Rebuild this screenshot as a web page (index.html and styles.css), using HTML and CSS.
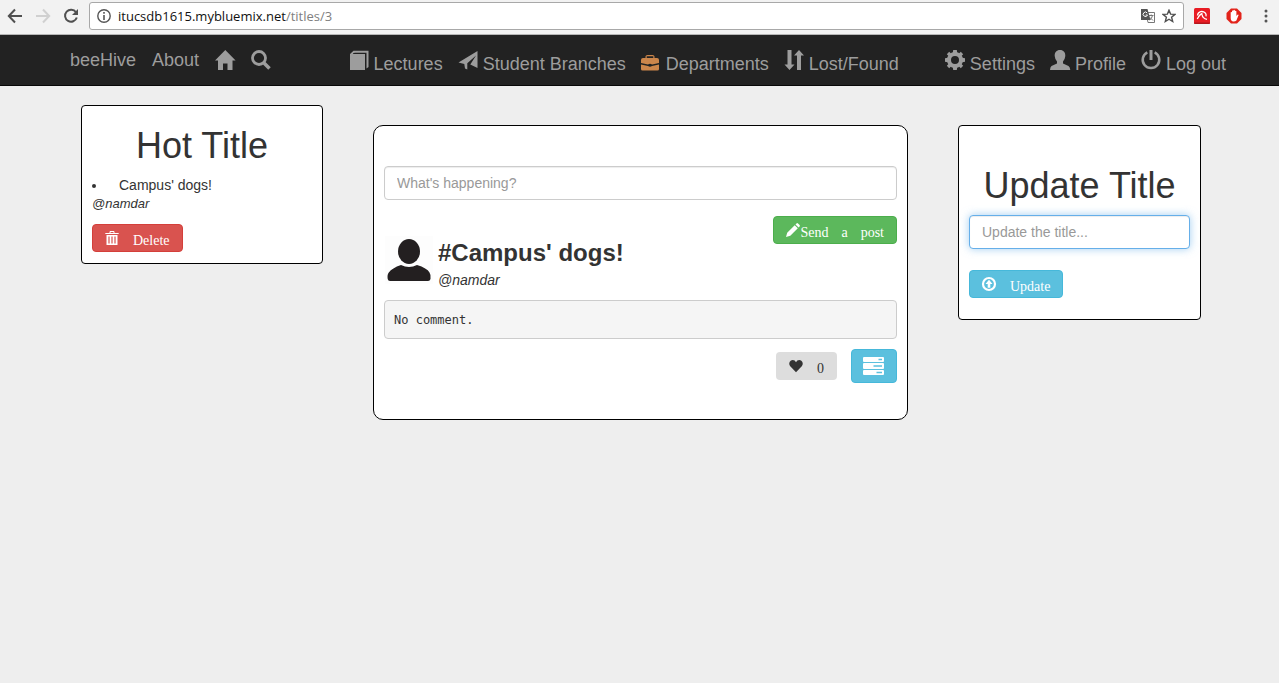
FILE: index.html
```html
<!DOCTYPE html>
<html lang="en">
<head>
<meta charset="utf-8">
<title>beeHive</title>
<link rel="stylesheet" href="styles.css">
</head>
<body>
<header class="browser">
  <button class="tool" aria-label="Back"><svg width="16" height="16" viewBox="0 0 16 16" fill="none" stroke="#505050" stroke-width="2"><path d="M15 8H2M8 1.500L1.800 8L8 14.500"/></svg></button>
  <button class="tool" aria-label="Forward"><svg width="16" height="16" viewBox="0 0 16 16" fill="none" stroke="#d0d0d0" stroke-width="2"><path d="M1 8H14M8 1.500L14.200 8L8 14.500"/></svg></button>
  <button class="tool" aria-label="Reload"><svg width="16" height="16" viewBox="0 0 16 16"><path d="M13 4.300A6 6 0 1 0 13.800 9.500" fill="none" stroke="#505050" stroke-width="2"/><path d="M15 1V7H9Z" fill="#505050"/></svg></button>
  <div class="address">
    <svg width="14" height="14" viewBox="0 0 14 14"><circle cx="7" cy="7" r="6.200" fill="none" stroke="#555" stroke-width="1.400"/><path d="M6.200 3h1.600v1.700H6.200zM6.200 6h1.600v5H6.200z" fill="#555"/></svg>
    <span class="url">itucsdb1615.mybluemix.net<span class="path">/titles/3</span></span>
    <button class="tool" aria-label="Translate"><svg width="14" height="14" viewBox="0 0 14 14"><path d="M5 3.500h8.500v10H7z" fill="#fff" stroke="#777"/><path d="M8 6.500h4.500M10.200 5.500v1M11.500 6.500q-.5 3-3 4.500M9 8.500l3 3" fill="none" stroke="#777"/><path d="M0 0h6.500l3 11H0z" fill="#555"/><path d="M6.200 4A2.200 2.200 0 1 0 6.500 6H4.700" fill="none" stroke="#fff"/></svg></button>
    <button class="tool" aria-label="Bookmark"><svg width="14" height="14" viewBox="0 0 14 14"><path d="M7 1.200L8.600 5.100L12.900 5.400L9.600 8.200L10.700 12.500L7 10.200L3.300 12.500L4.400 8.200L1.100 5.400L5.400 5.100Z" fill="none" stroke="#505050" stroke-width="1.400"/></svg></button>
  </div>
  <div class="extensions">
    <button class="tool" aria-label="Antivirus"><svg width="16" height="16" viewBox="0 0 16 16"><rect width="16" height="16" rx="1.500" fill="#e81c24"/><path d="M0 14.500h16v.5q0 1-1 1H1q-1 0-1-1z" fill="#b3161c"/><path d="M3.500 7.500C4 3.500 8.500 2.200 11.300 5Q12.500 6.500 12 8.300M8.500 5.500Q5.800 6 3.300 11M8 6.500Q8.500 10.500 13 11.300" fill="none" stroke="#fff" stroke-width="1.300"/></svg></button>
    <button class="tool" aria-label="Ad blocker"><svg width="16" height="16" viewBox="0 0 16 16"><path d="M5 0.500h6L15.500 5v6L11 15.500H5L.5 11V5z" fill="#e2231a"/><path d="M4.700 8V4.300q.7-.8 1.300 0V2.800q.7-.8 1.400 0V2.200q.8-.8 1.500 0v.8q.8-.7 1.500.2V8l1-1.200q1-.5 1.200.3L10.400 12.500Q9.500 13.500 7.500 13.500Q4.700 13.300 4.700 10z" fill="#fff"/></svg></button>
    <button class="tool" aria-label="Menu"><svg width="4" height="14" viewBox="0 0 4 14" fill="#555"><circle cx="2" cy="2" r="1.500"/><circle cx="2" cy="7" r="1.500"/><circle cx="2" cy="12" r="1.500"/></svg></button>
  </div>
</header>

<nav class="navbar">
  <div class="nav-group brand">
    <a href="#">beeHive</a>
    <a href="#">About</a>
    <a href="#" aria-label="Home"><svg class="icon" viewBox="0 0 20 20"><path d="M10.300 0L20.600 10.500H17.500V20H12.500V13.500H8V20H3V10.500H0Z"/></svg></a>
    <a href="#" aria-label="Search"><svg class="icon" viewBox="0 0 20 20"><circle cx="8" cy="8" r="6.500" fill="none" stroke="currentColor" stroke-width="2.800"/><path d="M12.500 12.500L18.500 18.500" stroke="currentColor" stroke-width="3.600"/></svg></a>
  </div>
  <div class="nav-group sections">
    <a href="#"><svg class="icon" viewBox="0 0 20 20"><path d="M1 4H16V20H1Z"/><path d="M1 4L4.500 .800H19.500V17L17.500 18.500V2.800H5.500L4.500 4Z"/><path d="M4 3.500H16.500V19" fill="none" stroke="#222" stroke-width=".8"/></svg>Lectures</a>
    <a href="#"><svg class="icon" viewBox="0 0 20 20"><path d="M19.500 1V18L12.300 14.500L18 5.500L9.300 13.200V19.500L7 18.500L6.300 14L.5 12.500Z"/></svg>Student Branches</a>
    <a href="#"><svg class="icon briefcase" viewBox="0 0 20 20"><path d="M4.500 8V6.500Q4.500 5 6.500 5H11.500Q13.500 5 13.500 6.500V8H12.300V6.300H5.700V8Z"/><path d="M2 8H16Q18 8 18 10V13L11 14.500Q9 13 7 14.500L0 13V10Q0 8 2 8Z"/><path d="M0 14.500L7 16Q9 17.500 11 16L18 14.500V19Q18 20.500 16.500 20.500H1.500Q0 20.500 0 19Z"/></svg>Departments</a>
    <a href="#"><svg class="icon" viewBox="0 0 20 20"><path d="M3.500 0H7.500V14.500H10.500L5.500 20L.5 14.500H3.500ZM13 20H17V5.500H20L15 0L10 5.500H13Z"/></svg>Lost/Found</a>
  </div>
  <div class="nav-group account">
    <a href="#"><svg class="icon" viewBox="0 0 20 20"><circle cx="10" cy="10" r="6" fill="none" stroke="currentColor" stroke-width="4"/><path d="M8.200 0h3.600l.6 4H7.600zM8.200 20h3.600l.6-4H7.600zM0 8.200v3.600l4 .6V7.600zM20 8.200v3.600l-4 .6V7.600zM4.200 1.800L1.800 4.200L4.500 7L7 4.500zM15.800 1.800L18.200 4.200L15.500 7L13 4.500zM4.200 18.200L1.800 15.800L4.500 13L7 15.500zM15.800 18.200L18.200 15.800L15.500 13L13 15.500z"/></svg>Settings</a>
    <a href="#"><svg class="icon" viewBox="0 0 20 20"><path d="M10 0C13.500 0 15.500 2.500 15.300 6Q15 9.500 13 11.500V13.500L18.500 16Q20 17 20.300 20H0Q.2 17 1.500 16L7 13.500V11.500Q5 9.500 4.700 6C4.500 2.500 6.500 0 10 0Z"/></svg>Profile</a>
    <a href="#"><svg class="icon" viewBox="0 0 20 20"><path d="M6.300 2.300A8.300 8.300 0 1 0 13.700 2.300" fill="none" stroke="currentColor" stroke-width="2.500"/><path d="M8.500 0h3v10h-3z"/></svg>Log out</a>
  </div>
</nav>

<main class="page">
  <section class="card hot">
    <h1>Hot Title</h1>
    <ul><li><span>Campus' dogs!</span></li></ul>
    <em class="author">@namdar</em>
    <button class="btn danger"><svg class="glyph" viewBox="0 0 14 14"><path d="M5 2V.5H9V2M.3 2.500H13.700" fill="none" stroke="currentColor"/><path d="M1.500 4H12.500V14H1.500Z"/><path d="M4 5.500V12.500M7 5.500V12.500M10 5.500V12.500" stroke="#d9534f" stroke-width="1.200"/></svg><span>Delete</span></button>
  </section>

  <section class="card feed">
    <input class="field" type="text" aria-label="New post" placeholder="What's happening?">
    <div class="post">
      <div class="media">
        <svg class="avatar" viewBox="0 0 48 48"><rect width="48" height="48" fill="#fdfdfd"/><ellipse cx="24" cy="15.500" rx="11" ry="12.500" fill="#231f20"/><path d="M16 29Q24 33 32 29Q42 32 44.500 36.500Q46 38.500 45.500 43Q45 45 43 45H5Q3 45 2.700 43Q2 38.500 3.800 36.500Q7 32 16 29Z" fill="#231f20"/></svg>
        <div class="media-text">
          <h3>#Campus' dogs!</h3>
          <em>@namdar</em>
        </div>
      </div>
      <button class="btn success"><span class="with-icon"><svg class="glyph" viewBox="0 0 14 14"><path d="M0 14L1.200 9.700L8.700 2.200L11.800 5.300L4.300 12.800ZM9.500 1.400L10.500.4Q11.300-.2 12 .4L13.600 2Q14.200 2.700 13.600 3.500L12.600 4.500Z"/></svg><span>Send</span></span> <span>a</span> <span>post</span></button>
    </div>
    <pre class="comment">No comment.</pre>
    <div class="actions">
      <button class="btn like" aria-label="Like"><svg class="glyph" viewBox="0 0 14 14"><path d="M7 13.200L1 7Q-.4 5 .6 3Q1.700 1.100 3.700 1.100Q6 1.200 7 3.300Q8 1.200 10.300 1.100Q12.300 1.100 13.400 3Q14.400 5 13 7Z"/></svg><span>0</span></button>
      <button class="btn info comments" aria-label="Comments"><svg width="22" height="18" viewBox="0 0 22 18" fill="#fff"><rect x="0" width="21" height="5" rx="1"/><rect x="0" y="6" width="21" height="6" rx="1"/><rect x="0" y="13" width="21" height="5" rx="1"/><path d="M15.500 2.500h3.500M10.500 9h8.500M13.500 15.500h5.500" stroke="#5bc0de" stroke-width="1.500"/></svg></button>
    </div>
  </section>

  <section class="card update">
    <h1>Update Title</h1>
    <input class="field focused" type="text" aria-label="New title" placeholder="Update the title...">
    <button class="btn info"><svg class="glyph" viewBox="0 0 14 14"><circle cx="7" cy="7" r="6" fill="none" stroke="currentColor" stroke-width="2.200"/><path d="M7 2.800L10.500 7H8.300V10.800H5.700V7H3.500Z"/></svg><span>Update</span></button>
  </section>
</main>
</body>
</html>
```
FILE: styles.css
```css
* { box-sizing: border-box; }

body {
  margin: 0;
  background: #eee;
  color: #333;
  font: 14px/20px "Liberation Sans", Arial, sans-serif;
}

button, input { margin: 0; font: inherit; }
svg { display: block; flex: none; }

/* Browser toolbar */
.browser {
  display: flex;
  align-items: center;
  gap: 12px;
  height: 35px;
  padding: 0 11px 3px 7px;
  background: #f2f2f2;
  border-bottom: 1px solid #b6b6b6;
}

.tool { padding: 0; border: 0; background: none; }

.address {
  display: flex;
  flex: 1;
  align-items: center;
  gap: 7px;
  height: 28px;
  margin: 0 -2px 0 -2px;
  padding: 0 7px;
  background: #fff;
  border: 1px solid #a8a8a8;
  border-radius: 3px;
}

.url { flex: 1; color: #111; font: 13px/18px "Open Sans", sans-serif; }
.url .path { color: #808080; }
.extensions { display: flex; align-items: center; gap: 16px; }
.extensions .tool:last-child { margin-left: 6px; }

/* Site navigation */
.navbar {
  display: flex;
  height: 51px;
  padding: 0 53px 0 70px;
  background: #222;
  border-bottom: 1px solid #080808;
  font-size: 18px;
}

.nav-group { display: flex; align-items: flex-start; gap: 15px; padding-top: 15px; }
.nav-group a { display: flex; gap: 5px; color: #9d9d9d; text-decoration: none; white-space: nowrap; }
.brand { gap: 16px; margin-right: auto; }
.brand a { line-height: 20px; }
.sections, .account { line-height: 28px; }
.account { margin-left: 46px; }
.icon { width: 20px; height: 20px; overflow: visible; fill: currentColor; }
.briefcase { color: #cc864b; }

/* Page columns */
.page {
  display: grid;
  grid-template-columns: 242fr 535fr 243fr;
  gap: 50px;
  align-items: start;
  padding: 19px 78px 19px 81px;
}

.card {
  padding: 0 10px;
  background: #fff;
  border: 1px solid #000;
  border-radius: 4px;
}

.card h1 { margin: 20px 0 10px; font-size: 36px; font-weight: 400; line-height: 40px; text-align: center; }
.hot { padding-bottom: 11px; }
.hot ul { margin: 0; padding: 0; list-style: disc inside; }
.hot li { line-height: 18px; }
.hot li span { padding-left: 8px; }
.author { display: block; margin-bottom: 11px; font-size: 13px; line-height: 19px; }

.feed { margin-top: 20px; padding: 40px 10px 36px; border-radius: 10px; }
.update { margin-top: 20px; padding: 40px 10px 21px; }
.update h1 { margin: 0 0 9px; }
.update .field { margin-bottom: 21px; }

.field {
  display: block;
  width: 100%;
  height: 34px;
  padding: 6px 12px;
  color: #555;
  background: #fff;
  border: 1px solid #ccc;
  border-radius: 4px;
  box-shadow: inset 0 1px 1px rgba(0, 0, 0, .075);
}
.field::placeholder { color: #999; opacity: 1; }
.focused { border-color: #66afe9; box-shadow: inset 0 1px 1px rgba(0, 0, 0, .075), 0 0 8px rgba(102, 175, 233, .6); }

/* Buttons */
.btn {
  display: flex;
  align-items: center;
  gap: 14px;
  height: 28px;
  padding: 0 12px;
  color: #fff;
  border: 1px solid transparent;
  border-radius: 4px;
  font: 14px/20px "Liberation Serif", "Times New Roman", serif;
}
.btn span { padding-top: 6px; }
.glyph { width: 14px; height: 14px; overflow: visible; fill: currentColor; }
.btn .with-icon { display: flex; align-items: center; padding-top: 0; }
.danger { background: #d9534f; border-color: #d43f3a; }
.success { gap: 13px; background: #5cb85c; border-color: #4cae4c; }
.info { background: #5bc0de; border-color: #46b8da; }
.like { color: #333; background: #ddd; }
.comments { height: 34px; padding: 0 11px; }

/* Post */
.post { display: flex; justify-content: space-between; align-items: flex-start; margin-top: 16px; }
.media { display: flex; gap: 5px; padding: 20px 0 0 1px; }
.avatar { width: 48px; height: 48px; }
.media-text { padding-top: 4px; }
.media h3 { margin: 0 0 4px; font-size: 24px; line-height: 26px; }
.media em { display: block; }

.comment {
  margin: 10px 0;
  padding: 10px 9px 8px;
  background: #f5f5f5;
  border: 1px solid #ccc;
  border-radius: 4px;
  font: 12px/19px "DejaVu Sans Mono", monospace;
}

.actions { display: flex; justify-content: flex-end; align-items: center; gap: 14px; }
```
